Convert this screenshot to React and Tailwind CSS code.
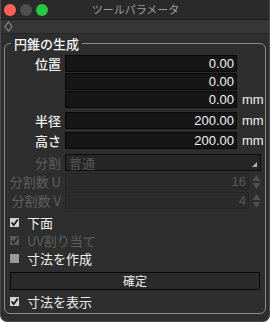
import React from "react";

const jp = { fontFamily: '"Noto Sans CJK JP", "Liberation Sans", sans-serif' };
const lat = { fontFamily: '"Liberation Sans", "Noto Sans CJK JP", sans-serif' };

function Label({ children, dim }) {
  return (
    <div
      className={`w-[60px] shrink-0 pr-[4px] text-right text-[13px] leading-none whitespace-nowrap ${dim ? "text-[#5e5e5e]" : "text-[#f0f0f0] font-medium"}`}
    >
      {children}
    </div>
  );
}

function Field({ value, unit, label, className = "" }) {
  return (
    <div className={`flex items-center leading-none ${className}`}>
      <Label>{label}</Label>
      <div className="w-[172px] h-[17px] border border-[#070707] bg-[#161616] flex items-center justify-end pr-[2px] text-[13px] leading-none text-[#f2f2f2]" style={lat}>
        {value}
      </div>
      {unit && (
        <span className="ml-[5px] text-[13px] leading-none text-[#f0f0f0]" style={lat}>
          {unit}
        </span>
      )}
    </div>
  );
}

function Stepper({ label, value, className = "" }) {
  return (
    <div className={`flex items-center leading-none ${className}`}>
      <Label dim>{label}</Label>
      <div className="w-[184px] h-[17px] border border-[#262626] bg-[#2b2b2b] flex items-center justify-end pr-[2px] text-[13px] leading-none text-[#565656]" style={lat}>
        {value}
      </div>
      <svg width="9" height="16" viewBox="0 0 9 16" className="ml-[3px]">
        <path d="M4.5 1 L8.5 7 H0.5 Z" fill="#505050" />
        <path d="M4.5 15 L8.5 9 H0.5 Z" fill="#505050" />
      </svg>
    </div>
  );
}

function Check({ label, state, className = "" }) {
  const box =
    state === "on" ? "bg-[#d4d4d4]" : state === "dim" ? "bg-[#5a5a5a]" : "bg-[#9a9a9a]";
  return (
    <div className={`flex items-center h-[13px] pl-[5px] ${className}`}>
      <div className={`w-[9px] h-[9px] ${box} flex items-center justify-center`}>
        {state !== "off" && (
          <svg width="9" height="9" viewBox="0 0 9 9">
            <path d="M1.5 4.5 L3.7 7 L7.8 1.5" stroke={state === "dim" ? "#2a2a2a" : "#1c1c1c"} strokeWidth="1.8" fill="none" />
          </svg>
        )}
      </div>
      <span className={`ml-[8px] text-[13px] leading-none ${state === "dim" ? "text-[#5e5e5e]" : "text-[#eeeeee]"}`}>
        {label}
      </span>
    </div>
  );
}

export default function App() {
  return (
    <div className="w-[270px] h-[322px] bg-[#2e2e2e] rounded-b-[7px] overflow-hidden flex flex-col border-x border-b border-[#4a4a4a]" style={jp}>
      <div className="h-[20px] bg-[#2a2a2a] flex items-center shrink-0 border-b border-[#1c1c1c]">
        <div className="flex items-center gap-[4px] pl-[3px]">
          <span className="w-[12px] h-[12px] rounded-full bg-[#fe5f57]" />
          <span className="w-[12px] h-[12px] rounded-full bg-[#4f4f4f]" />
          <span className="w-[12px] h-[12px] rounded-full bg-[#28c840]" />
        </div>
        <div className="flex-1 text-center text-[11px] leading-none text-[#9d9d9d] pr-[46px]">ツールパラメータ</div>
      </div>
      <div className="h-[14px] bg-[#363636] flex items-center pl-[3px] shrink-0 border-b border-[#262626]">
        <svg width="9" height="11" viewBox="0 0 9 11">
          <path d="M4.5 1 L8 5.5 L4.5 10 L1 5.5 Z" stroke="#8a8a8a" strokeWidth="1.2" fill="none" />
        </svg>
      </div>
      <fieldset className="mx-[3px] mt-[3px] mb-[7px] flex-1 border border-[#8a8a8a] rounded-[6px]">
        <legend className="ml-[6px] px-[3px] text-[13px] text-[#f4f4f4] font-medium leading-none">円錐の生成</legend>
        <Field label="位置" value="0.00" className="mt-[5px]" />
        <Field label="" value="0.00" className="mt-[1px]" />
        <Field label="" value="0.00" unit="mm" className="mt-[1px]" />
        <Field label="半径" value="200.00" unit="mm" className="mt-[4px]" />
        <Field label="高さ" value="200.00" unit="mm" className="mt-[3px]" />
        <div className="flex items-center mt-[5px]">
          <Label dim>分割</Label>
          <div className="relative w-[196px] h-[17px] border border-[#0c0c0c] bg-[#262626] flex items-center pl-[3px] text-[13px] leading-none text-[#575757]">
            普通
            <svg width="5" height="5" viewBox="0 0 5 5" className="absolute right-[3px] bottom-[3px]">
              <path d="M5 0 V5 H0 Z" fill="#b0b0b0" />
            </svg>
          </div>
        </div>
        <Stepper label="分割数 U" value="16" className="mt-[2px]" />
        <Stepper label="分割数 V" value="4" className="mt-[2px]" />
        <Check label="下面" state="on" className="mt-[7px]" />
        <Check label="UV割り当て" state="dim" className="mt-[5px]" />
        <Check label="寸法を作成" state="off" className="mt-[5px]" />
        <div className="mx-[5px] mt-[7px] h-[18px] border border-[#090909] bg-[#2a2a2a] flex items-center justify-center text-[12px] leading-none text-[#eeeeee]">
          確定
        </div>
        <Check label="寸法を表示" state="on" className="mt-[5px]" />
      </fieldset>
    </div>
  );
}
